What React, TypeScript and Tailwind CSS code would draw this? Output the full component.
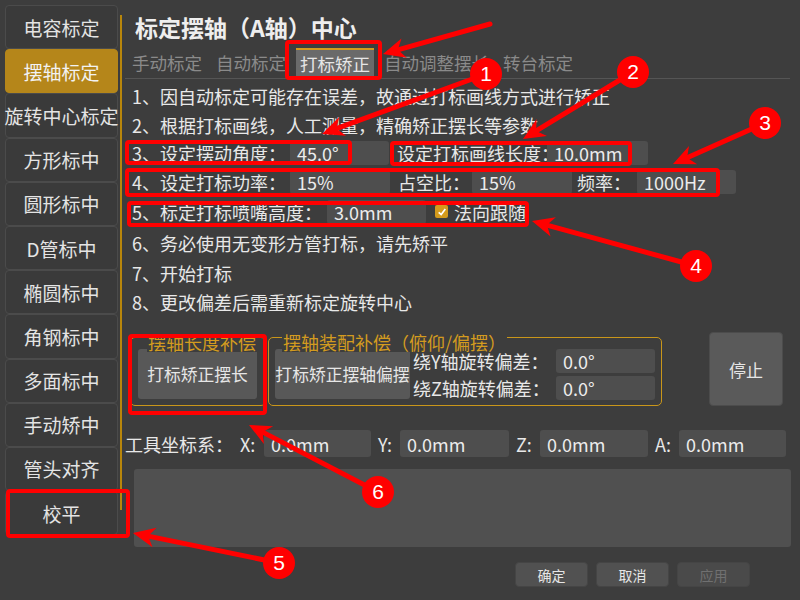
import type { ReactNode } from "react";

const sideItems = [
  "电容标定",
  "摆轴标定",
  "旋转中心标定",
  "方形标中",
  "圆形标中",
  "D管标中",
  "椭圆标中",
  "角钢标中",
  "多面标中",
  "手动矫中",
  "管头对齐",
  "校平",
];

const tabs = ["手动标定", "自动标定", "打标矫正", "自动调整摆长", "转台标定"];

const fieldClassName =
  "flex h-[24px] shrink-0 items-center rounded-[3px] bg-[#4e4e4e] pl-[7px] text-[18px] leading-none text-[#ececec]";

function Field({ className, children }: { className: string; children: ReactNode }) {
  return <div className={`${fieldClassName} ${className}`}>{children}</div>;
}

function Row({ h, children }: { h: string; children: ReactNode }) {
  return (
    <div className={`flex items-center whitespace-nowrap text-[18px] leading-none ${h}`}>
      {children}
    </div>
  );
}

// red call-outs drawn over the screenshot
const boxes = [
  { x: 287, y: 42, w: 93, h: 36 },
  { x: 392, y: 143, w: 238, h: 21 },
  { x: 127, y: 142, w: 223, h: 21 },
  { x: 127, y: 170, w: 591, h: 25 },
  { x: 129, y: 203, w: 398, h: 22 },
  { x: 130, y: 336, w: 135, h: 77 },
  { x: 8, y: 491, w: 120, h: 45 },
];

const arrows = [
  { x1: 490, y1: 24, x2: 383, y2: 54 },
  { x1: 486, y1: 74, x2: 322, y2: 134 },
  { x1: 633, y1: 72, x2: 523, y2: 139 },
  { x1: 765, y1: 123, x2: 673, y2: 164 },
  { x1: 696, y1: 266, x2: 532, y2: 221 },
  { x1: 279, y1: 563, x2: 133, y2: 533 },
  { x1: 378, y1: 492, x2: 249, y2: 425 },
];

const badges = [
  { n: "1", x: 486, y: 74 },
  { n: "2", x: 633, y: 72 },
  { n: "3", x: 765, y: 123 },
  { n: "4", x: 696, y: 266 },
  { n: "5", x: 279, y: 563 },
  { n: "6", x: 378, y: 492 },
];

function Arrow({ x1, y1, x2, y2 }: { x1: number; y1: number; x2: number; y2: number }) {
  const len = Math.hypot(x2 - x1, y2 - y1);
  const ux = (x2 - x1) / len;
  const uy = (y2 - y1) / len;
  const headLen = 22;
  const headW = 10;
  const bx = x2 - ux * headLen;
  const by = y2 - uy * headLen;
  const nx = x2 - ux * headLen * 0.7;
  const ny = y2 - uy * headLen * 0.7;
  const points = [
    `${x2},${y2}`,
    `${bx - uy * headW},${by + ux * headW}`,
    `${nx},${ny}`,
    `${bx + uy * headW},${by - ux * headW}`,
  ].join(" ");
  return (
    <g>
      <line x1={x1} y1={y1} x2={nx} y2={ny} stroke="#ff0000" strokeWidth={5} strokeLinecap="round" />
      <polygon points={points} fill="#ff0000" />
    </g>
  );
}

function Annotations() {
  return (
    <svg className="pointer-events-none absolute left-0 top-0 h-[600px] w-[800px]" viewBox="0 0 800 600">
      {boxes.map((b, i) => (
        <rect key={i} x={b.x} y={b.y} width={b.w} height={b.h} rx={2} fill="none" stroke="#ff0000" strokeWidth={4} />
      ))}
      {arrows.map((a, i) => (
        <Arrow key={i} {...a} />
      ))}
      {badges.map((b) => (
        <g key={b.n}>
          <circle cx={b.x} cy={b.y} r={16} fill="#ff0000" />
          <text
            x={b.x}
            y={b.y + 7}
            textAnchor="middle"
            fill="#ffffff"
            fontSize={21}
            fontFamily="Liberation Sans, Arial, sans-serif"
          >
            {b.n}
          </text>
        </g>
      ))}
    </svg>
  );
}

export default function App() {
  return (
    <div className="relative flex h-[600px] w-[800px] overflow-hidden bg-[#3d3d3d] font-['Noto_Sans_CJK_SC',sans-serif] text-[#e8e8e8]">
      <nav className="ml-[5px] mt-[5px] flex w-[113px] shrink-0 flex-col">
        {sideItems.map((item) => (
          <div
            key={item}
            className={
              item === "摆轴标定"
                ? "flex h-[44.2px] items-center justify-center whitespace-nowrap rounded-[4px] border border-[#b5861a] bg-[#b5861a] text-[19px] leading-none text-[#f2f2f2]"
                : "flex h-[44.2px] items-center justify-center whitespace-nowrap rounded-[4px] border border-[#4b4b4b] bg-[#3a3a3a] text-[19px] leading-none text-[#e4e4e4]"
            }
          >
            {item}
          </div>
        ))}
      </nav>

      <div className="ml-[2px] mt-[15px] h-[495px] w-[2px] shrink-0 bg-[#b8860b]" />

      <main className="flex min-w-0 flex-1 flex-col">
        <h1 className="ml-[13px] mt-[14px] h-[26px] whitespace-nowrap text-[23px] font-bold leading-[26px] text-[#eeeeee]">
          标定摆轴（A轴）中心
        </h1>

        <div className="ml-[3px] mr-[10px] mt-[8px] flex h-[31px] gap-[6px] border-b border-[#555555] pl-[3px]">
          {tabs.map((tab) => (
            <div
              key={tab}
              className={
                tab === "打标矫正"
                  ? "flex h-[30px] items-center border-t-2 border-[#d49a1c] bg-[#6a6a6a] px-[4px] text-[17.5px] leading-none text-[#e6e6e6]"
                  : "flex h-[30px] items-center px-[4px] text-[17.5px] leading-none text-[#8a8a8a]"
              }
            >
              {tab}
            </div>
          ))}
        </div>

        <div className="ml-[10px] mt-[2.5px] flex flex-col">
          <Row h="h-[29px]">1、因自动标定可能存在误差，故通过打标画线方式进行矫正</Row>
          <Row h="h-[28px]">2、根据打标画线，人工测量，精确矫正摆长等参数</Row>
          <Row h="h-[28.5px]">
            <span className="w-[158px] shrink-0">3、设定摆动角度：</span>
            <Field className="w-[99px]">45.0°</Field>
            <span className="ml-[8px] w-[150px] shrink-0">设定打标画线长度：</span>
            <Field className="w-[101px]">10.0mm</Field>
          </Row>
          <Row h="h-[29.5px]">
            <span className="w-[158px] shrink-0">4、设定打标功率：</span>
            <Field className="w-[100px]">15%</Field>
            <span className="ml-[8px] w-[74px] shrink-0">占空比：</span>
            <Field className="w-[100px]">15%</Field>
            <span className="ml-[5px] w-[60px] shrink-0">频率：</span>
            <Field className="w-[99px]">1000Hz</Field>
          </Row>
          <Row h="h-[30.5px]">
            <span className="w-[195px] shrink-0">5、标定打标喷嘴高度：</span>
            <Field className="w-[99px]">3.0mm</Field>
            <span className="ml-[9px] flex h-[13px] w-[13px] items-center justify-center rounded-[2px] bg-[#d49a1c]">
              <svg viewBox="0 0 12 12" className="h-[10px] w-[10px]">
                <path d="M2 6.5 L5 9 L10 2.5" fill="none" stroke="#ffffff" strokeWidth={2} />
              </svg>
            </span>
            <span className="ml-[6px]">法向跟随</span>
          </Row>
          <Row h="h-[31px]">6、务必使用无变形方管打标，请先矫平</Row>
          <Row h="h-[29.5px]">7、开始打标</Row>
          <Row h="h-[29.5px]">8、更改偏差后需重新标定旋转中心</Row>
        </div>

        <div className="mt-[15px] flex h-[74px] items-start">
          <div className="relative ml-[8px] mt-[5px] h-[69px] w-[136px] shrink-0 rounded-[5px] border border-[#c9961a] pl-[7px] pt-[11px]">
            <span className="absolute left-[16px] top-[-6px] bg-[#3d3d3d] px-[1px] text-[18px] leading-[20px] text-[#d39b1f]">
              摆轴长度补偿
            </span>
            <div className="flex h-[50px] w-[119px] items-center justify-center whitespace-nowrap rounded-[3px] bg-[#585858] text-[16.8px] leading-none text-[#e6e6e6]">
              打标矫正摆长
            </div>
          </div>

          <div className="relative ml-[2px] mt-[5px] flex h-[69px] w-[394px] shrink-0 rounded-[5px] border border-[#c9961a] pl-[6px] pt-[11px]">
            <span className="absolute left-[13px] top-[-6px] whitespace-nowrap bg-[#3d3d3d] px-[1px] text-[18px] leading-[20px] text-[#d39b1f]">
              摆轴装配补偿（俯仰/偏摆）
            </span>
            <div className="flex h-[50px] w-[135px] shrink-0 items-center justify-center whitespace-nowrap rounded-[3px] bg-[#585858] text-[16.8px] leading-none text-[#e6e6e6]">
              打标矫正摆轴偏摆
            </div>
            <div className="ml-[3px] flex flex-col gap-[4px]">
              <div className="flex h-[23px] items-center whitespace-nowrap text-[18px] leading-none">
                <span className="w-[143px] shrink-0">绕Y轴旋转偏差：</span>
                <Field className="h-[23px] w-[99px]">0.0°</Field>
              </div>
              <div className="flex h-[23px] items-center whitespace-nowrap text-[18px] leading-none">
                <span className="w-[143px] shrink-0">绕Z轴旋转偏差：</span>
                <Field className="h-[23px] w-[99px]">0.0°</Field>
              </div>
            </div>
          </div>

          <div className="ml-[47px] flex h-[74px] w-[74px] shrink-0 items-center justify-center rounded-[4px] border border-[#4c4c4c] bg-[#5a5a5a] text-[17px] leading-none text-[#e6e6e6]">
            停止
          </div>
        </div>

        <div className="ml-[3px] mt-[24px] flex h-[27px] items-center whitespace-nowrap text-[18px] leading-none">
          <span className="w-[115px] shrink-0">工具坐标系：</span>
          <span className="w-[24px] shrink-0">X:</span>
          <Field className="h-[27px] w-[107px]">0.0mm</Field>
          <span className="ml-[7px] w-[22px] shrink-0">Y:</span>
          <Field className="h-[27px] w-[109px]">0.0mm</Field>
          <span className="ml-[7px] w-[24px] shrink-0">Z:</span>
          <Field className="h-[27px] w-[108px]">0.0mm</Field>
          <span className="ml-[7px] w-[24px] shrink-0">A:</span>
          <Field className="h-[27px] w-[107px]">0.0mm</Field>
        </div>

        <div className="ml-[12px] mt-[12px] h-[78px] w-[657px] shrink-0 rounded-[3px] bg-[#505050]" />

        <div className="ml-[393px] mt-[15px] flex gap-[8px] text-[14px] leading-none">
          <div className="flex h-[25px] w-[73px] items-center justify-center rounded-[4px] border border-[#454545] bg-[#515151] text-[#e6e6e6]">
            确定
          </div>
          <div className="flex h-[25px] w-[73px] items-center justify-center rounded-[4px] border border-[#454545] bg-[#515151] text-[#e6e6e6]">
            取消
          </div>
          <div className="flex h-[25px] w-[73px] items-center justify-center rounded-[4px] border border-[#454545] bg-[#4a4a4a] text-[#707070]">
            应用
          </div>
        </div>
      </main>

      <Annotations />
    </div>
  );
}
